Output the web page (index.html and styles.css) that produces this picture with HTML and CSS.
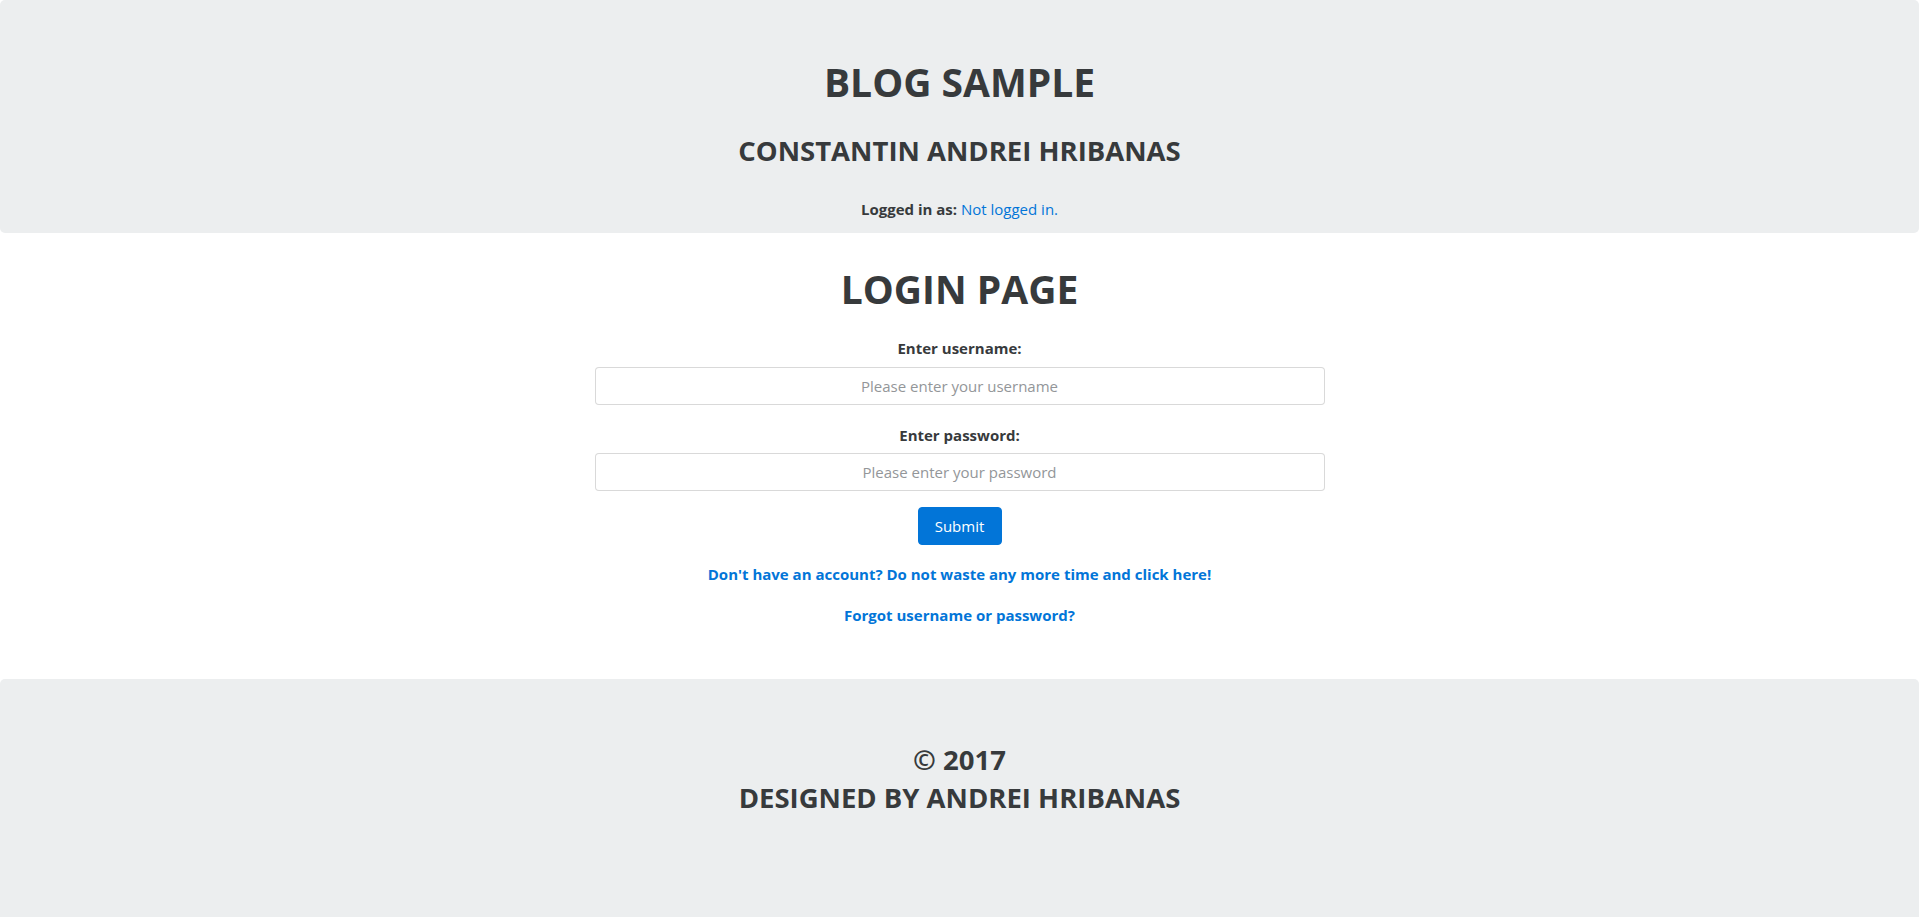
FILE: index.html
```html
<!DOCTYPE html>
<html lang="en">
<head>
<meta charset="utf-8">
<title>Blog Sample - Login</title>
<link rel="stylesheet" href="styles.css">
</head>
<body>
<header class="jumbotron header">
  <h1 class="site-title">BLOG SAMPLE</h1>
  <h3 class="site-author">CONSTANTIN ANDREI HRIBANAS</h3>
  <p class="status"><strong>Logged in as:</strong> <a class="link" href="#">Not logged in.</a></p>
</header>
<main class="content">
  <h1 class="page-title">LOGIN PAGE</h1>
  <form class="login-form">
    <label class="field-label" for="username">Enter username:</label>
    <input class="field-input" id="username" type="text" placeholder="Please enter your username">
    <label class="field-label second" for="password">Enter password:</label>
    <input class="field-input" id="password" type="password" placeholder="Please enter your password">
    <button class="btn-submit" type="button">Submit</button>
  </form>
  <p class="link-line first"><a class="link strong" href="#">Don't have an account? Do not waste any more time and click here!</a></p>
  <p class="link-line"><a class="link strong" href="#">Forgot username or password?</a></p>
</main>
<footer class="jumbotron footer">
  <h3 class="footer-line">© 2017</h3>
  <h3 class="footer-line last">DESIGNED BY ANDREI HRIBANAS</h3>
</footer>
</body>
</html>
```
FILE: styles.css
```css
html, body {
  margin: 0;
  padding: 0;
}

body {
  font-family: "Open Sans", "Noto Sans", "DejaVu Sans", sans-serif;
  font-size: 15px;
  line-height: 24px;
  color: #373a3c;
  background: #ffffff;
  text-align: center;
}

.jumbotron {
  background: #eceeef;
  border-radius: 5px;
}

.header {
  padding: 60px 0 12px;
}

.site-title {
  margin: 0 0 31px;
  font-size: 39px;
  line-height: 44px;
  font-weight: 700;
}

.site-author {
  margin: 0 0 31px;
  font-size: 27.5px;
  line-height: 31px;
  font-weight: 700;
}

.status {
  margin: 0;
  font-size: 15px;
  line-height: 24px;
}

.status strong {
  font-weight: 700;
}

.link {
  color: #0275d8;
  text-decoration: none;
}

.link.strong {
  font-weight: 700;
}

.content {
  padding-top: 34px;
  display: flex;
  flex-direction: column;
  align-items: center;
}

.page-title {
  margin: 0 0 25px;
  font-size: 39px;
  line-height: 44px;
  font-weight: 700;
}

.login-form {
  width: 730px;
  display: flex;
  flex-direction: column;
  align-items: center;
}

.field-label {
  display: block;
  margin-bottom: 7px;
  font-weight: 700;
  font-size: 15px;
  line-height: 24px;
}

.field-label.second {
  margin-top: 18px;
  margin-bottom: 6px;
}

.field-input {
  box-sizing: border-box;
  width: 100%;
  height: 38px;
  margin: 0;
  padding: 8px 12px;
  border: 1px solid rgba(0, 0, 0, 0.15);
  border-radius: 4px;
  font-family: inherit;
  font-size: 15px;
  line-height: 20px;
  color: #464a4c;
  text-align: center;
  background: #fff;
}

.field-input::placeholder {
  color: #939699;
  opacity: 1;
}

.btn-submit {
  box-sizing: border-box;
  margin-top: 16px;
  width: 84px;
  height: 38px;
  padding: 0;
  border: 1px solid #0275d8;
  border-radius: 4px;
  background: #0275d8;
  color: #fff;
  font-family: inherit;
  font-size: 15px;
  line-height: 20px;
  cursor: pointer;
}

.link-line {
  margin: 17px 0 0;
  font-size: 15px;
  line-height: 24px;
}

.footer {
  margin-top: 52px;
  padding: 65px 0 0;
  height: 173px;
  border-radius: 5px 5px 0 0;
}

.footer-line {
  margin: 0 0 7px;
  font-size: 27.5px;
  line-height: 31px;
  font-weight: 700;
}

.footer-line.last {
  margin-bottom: 0;
}
```
